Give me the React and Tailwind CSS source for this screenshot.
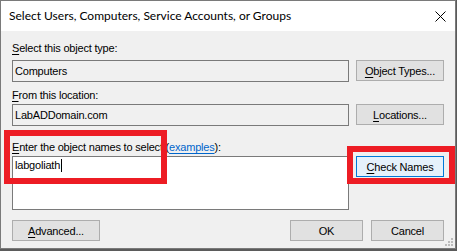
import React from 'react'

// Windows "Select Users, Computers..." object picker dialog

const BODY_FONT = { fontFamily: '"Liberation Sans", Arial, sans-serif' }
const TITLE_FONT = { fontFamily: 'Lato, "Liberation Sans", Arial, sans-serif' }

function Btn({ children, className = '', active = false }) {
  return (
    <div
      className={
        'h-[21px] flex items-center justify-center border text-[11px] tracking-[-0.2px] text-black ' +
        (active ? 'bg-[#e5f1fb] border-[#0078d7] ' : 'bg-[#e1e1e1] border-[#adadad] ') +
        className
      }
    >
      {children}
    </div>
  )
}

function Field({ children }) {
  return (
    <div className="w-[337px] h-[22px] border border-[#7a7a7a] bg-[#f0f0f0] pl-[2px] flex items-center text-[11px] text-black">
      {children}
    </div>
  )
}

function Key({ children }) {
  return <span className="underline underline-offset-[2px]">{children}</span>
}

export default function App() {
  return (
    <div className="w-[457px] h-[251px] bg-[#5b5b5b] overflow-hidden" style={BODY_FONT}>
      <div className="relative w-[456px] h-[249px] border border-[#7a7a7a] bg-[#f0f0f0] flex flex-col">
        {/* Title bar */}
        <div className="h-[30px] bg-white flex items-center justify-between pl-[8px] pr-[9px]">
          <span className="text-[12px] text-black" style={TITLE_FONT}>
            Select Users, Computers, Service Accounts, or Groups
          </span>
          <svg width="11" height="11" viewBox="0 0 11 11">
            <path d="M0.5 0.5 L10.5 10.5 M10.5 0.5 L0.5 10.5" stroke="#000" strokeWidth="1" fill="none" />
          </svg>
        </div>

        {/* Body */}
        <div className="flex-1 px-[11px] pt-[9px] flex flex-col text-[11px] leading-[16px] tracking-[-0.2px] text-black">
          <div className="h-[16px]"><Key>S</Key>elect this object type:</div>
          <div className="mt-[4px] flex justify-between items-start">
            <Field>Computers</Field>
            <Btn className="w-[88px]"><Key>O</Key>bject Types...</Btn>
          </div>

          <div className="mt-[5px] h-[16px]"><Key>F</Key>rom this location:</div>
          <div className="mt-[1px] flex justify-between items-start">
            <Field>LabADDomain.com</Field>
            <Btn className="w-[88px]"><Key>L</Key>ocations...</Btn>
          </div>

          <div className="mt-[13px] h-[16px]">
            <Key>E</Key>nter the object names to select (
            <span className="text-[#0066cc] underline underline-offset-[2px]">examples</span>):
          </div>
          <div className="mt-[1px] flex justify-between items-start">
            <div className="w-[337px] h-[54px] border border-[#7a7a7a] bg-white pl-[2px] pt-[1px] flex items-start">
              <span className="leading-[14px]">labgoliath</span>
              <span className="w-[1px] h-[13px] bg-black ml-[1px] mt-[1px]" />
            </div>
            <Btn className="w-[88px]" active><Key>C</Key>heck Names</Btn>
          </div>

          <div className="mt-[10px] flex items-start">
            <Btn className="w-[88px]"><Key>A</Key>dvanced...</Btn>
            <div className="ml-auto flex gap-[8px]">
              <Btn className="w-[73px]">OK</Btn>
              <Btn className="w-[73px]">Cancel</Btn>
            </div>
          </div>
        </div>

        {/* Red annotation boxes */}
        <div className="absolute left-[3px] top-[129px] w-[163px] h-[54px] border-[6px] border-[#ed1c24]" />
        <div className="absolute left-[346px] top-[145px] w-[108px] h-[38px] border-[6px] border-[#ed1c24]" />

        {/* Size grip */}
        <svg className="absolute right-[1px] bottom-[1px]" width="10" height="10" viewBox="0 0 10 10">
          <rect x="7" y="1" width="2" height="2" fill="#bcbcbc" />
          <rect x="4" y="4" width="2" height="2" fill="#bcbcbc" />
          <rect x="7" y="4" width="2" height="2" fill="#bcbcbc" />
          <rect x="1" y="7" width="2" height="2" fill="#bcbcbc" />
          <rect x="4" y="7" width="2" height="2" fill="#bcbcbc" />
          <rect x="7" y="7" width="2" height="2" fill="#bcbcbc" />
        </svg>
      </div>
    </div>
  )
}
